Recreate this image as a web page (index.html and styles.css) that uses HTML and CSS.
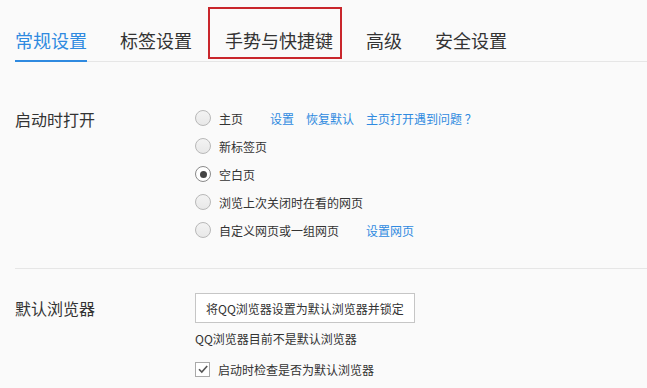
FILE: index.html
```html
<!DOCTYPE html>
<html lang="zh-CN">
<head>
<meta charset="utf-8">
<title>设置</title>
<link rel="stylesheet" href="styles.css">
</head>
<body>
<div class="page">
  <nav class="tabs">
    <span class="tab active">常规设置</span>
    <span class="tab">标签设置</span>
    <span class="tab">手势与快捷键</span>
    <span class="tab">高级</span>
    <span class="tab">安全设置</span>
  </nav>
  <div class="highlight"></div>

  <section class="section first">
    <div class="label">启动时打开</div>
    <div class="options">
      <div class="row"><span class="radio"></span><span class="opt w-home">主页</span><a class="link">设置</a><a class="link">恢复默认</a><a class="link">主页打开遇到问题 ？</a></div>
      <div class="row"><span class="radio"></span><span class="opt">新标签页</span></div>
      <div class="row"><span class="radio checked"></span><span class="opt">空白页</span></div>
      <div class="row"><span class="radio"></span><span class="opt">浏览上次关闭时在看的网页</span></div>
      <div class="row"><span class="radio"></span><span class="opt w-custom">自定义网页或一组网页</span><a class="link">设置网页</a></div>
    </div>
  </section>

  <div class="divider"></div>

  <section class="section second">
    <div class="label label-btn">默认浏览器</div>
    <div class="options">
      <button class="btn">将QQ浏览器设置为默认浏览器并锁定</button>
      <div class="note">QQ浏览器目前不是默认浏览器</div>
      <div class="row check-row"><span class="checkbox"><svg width="12" height="12" viewBox="0 0 12 12"><path d="M2 6.2 L4.8 9 L10.2 3" fill="none" stroke="#555" stroke-width="1.6"/></svg></span><span class="opt">启动时检查是否为默认浏览器</span></div>
    </div>
  </section>
</div>
</body>
</html>
```

FILE: styles.css
```css
* { box-sizing: border-box; }
html, body {
  margin: 0;
  padding: 0;
  background: #fafafa;
}
body {
  font-family: "Noto Sans CJK SC", "Microsoft YaHei", "Noto Sans", sans-serif;
  color: #333;
  width: 647px;
  height: 388px;
  overflow: hidden;
}
.page { position: relative; }

.tabs {
  display: flex;
  gap: 33px;
  margin-left: 15px;
  padding-top: 28px;
  border-bottom: 1px solid #e6e6e6;
}
.tab {
  font-size: 18px;
  line-height: 24px;
  padding-bottom: 8px;
  border-bottom: 2px solid transparent;
  margin-bottom: -1px;
  color: #333;
  white-space: nowrap;
}
.tab.active {
  color: #2f8ae0;
  border-bottom-color: #2f8ae0;
}
.highlight {
  position: absolute;
  left: 208px;
  top: 7px;
  width: 134px;
  height: 52px;
  border: 2px solid #c9262c;
}

.section {
  display: flex;
  padding-left: 15px;
}
.section.first {
  margin-top: 42px;
  padding-bottom: 24px;
}
.section.second {
  margin-top: 24px;
}
.label {
  width: 180px;
  flex: none;
  font-size: 16px;
  line-height: 28px;
  padding-top: 1px;
}
.label.label-btn {
  line-height: 30px;
  padding-top: 0;
}
.options {
  display: flex;
  flex-direction: column;
  align-items: flex-start;
}
.row {
  display: flex;
  align-items: center;
  height: 28px;
  font-size: 12px;
}
.radio {
  width: 16px;
  height: 16px;
  border-radius: 50%;
  border: 1px solid #b8b8b8;
  background: linear-gradient(#f3f3f3, #e8e8e8);
  position: relative;
  flex: none;
}
.radio.checked {
  background: #fff;
  border-color: #8a8a8a;
}
.radio.checked::after {
  content: "";
  position: absolute;
  left: 3.5px;
  top: 3.5px;
  width: 7px;
  height: 7px;
  border-radius: 50%;
  background: #444;
}
.opt {
  margin-left: 8px;
  white-space: nowrap;
}
.opt.w-home { width: 51px; }
.opt.w-custom { width: 147px; }
.link {
  color: #2f8ae0;
  margin-right: 12px;
  cursor: pointer;
  white-space: nowrap;
}

.divider {
  margin-left: 15px;
  border-top: 1px solid #e6e6e6;
}

.btn {
  height: 30px;
  padding: 0 10px;
  border: 1px solid #c6c6c6;
  background: #fff;
  font-family: inherit;
  font-size: 12px;
  color: #333;
  border-radius: 0;
}
.note {
  font-size: 12px;
  line-height: 20px;
  margin-top: 6px;
}
.check-row {
  margin-top: 6px;
}
.checkbox {
  width: 15px;
  height: 15px;
  border: 1px solid #a9a9a9;
  background: #fff;
  display: flex;
  align-items: center;
  justify-content: center;
  flex: none;
}
```
